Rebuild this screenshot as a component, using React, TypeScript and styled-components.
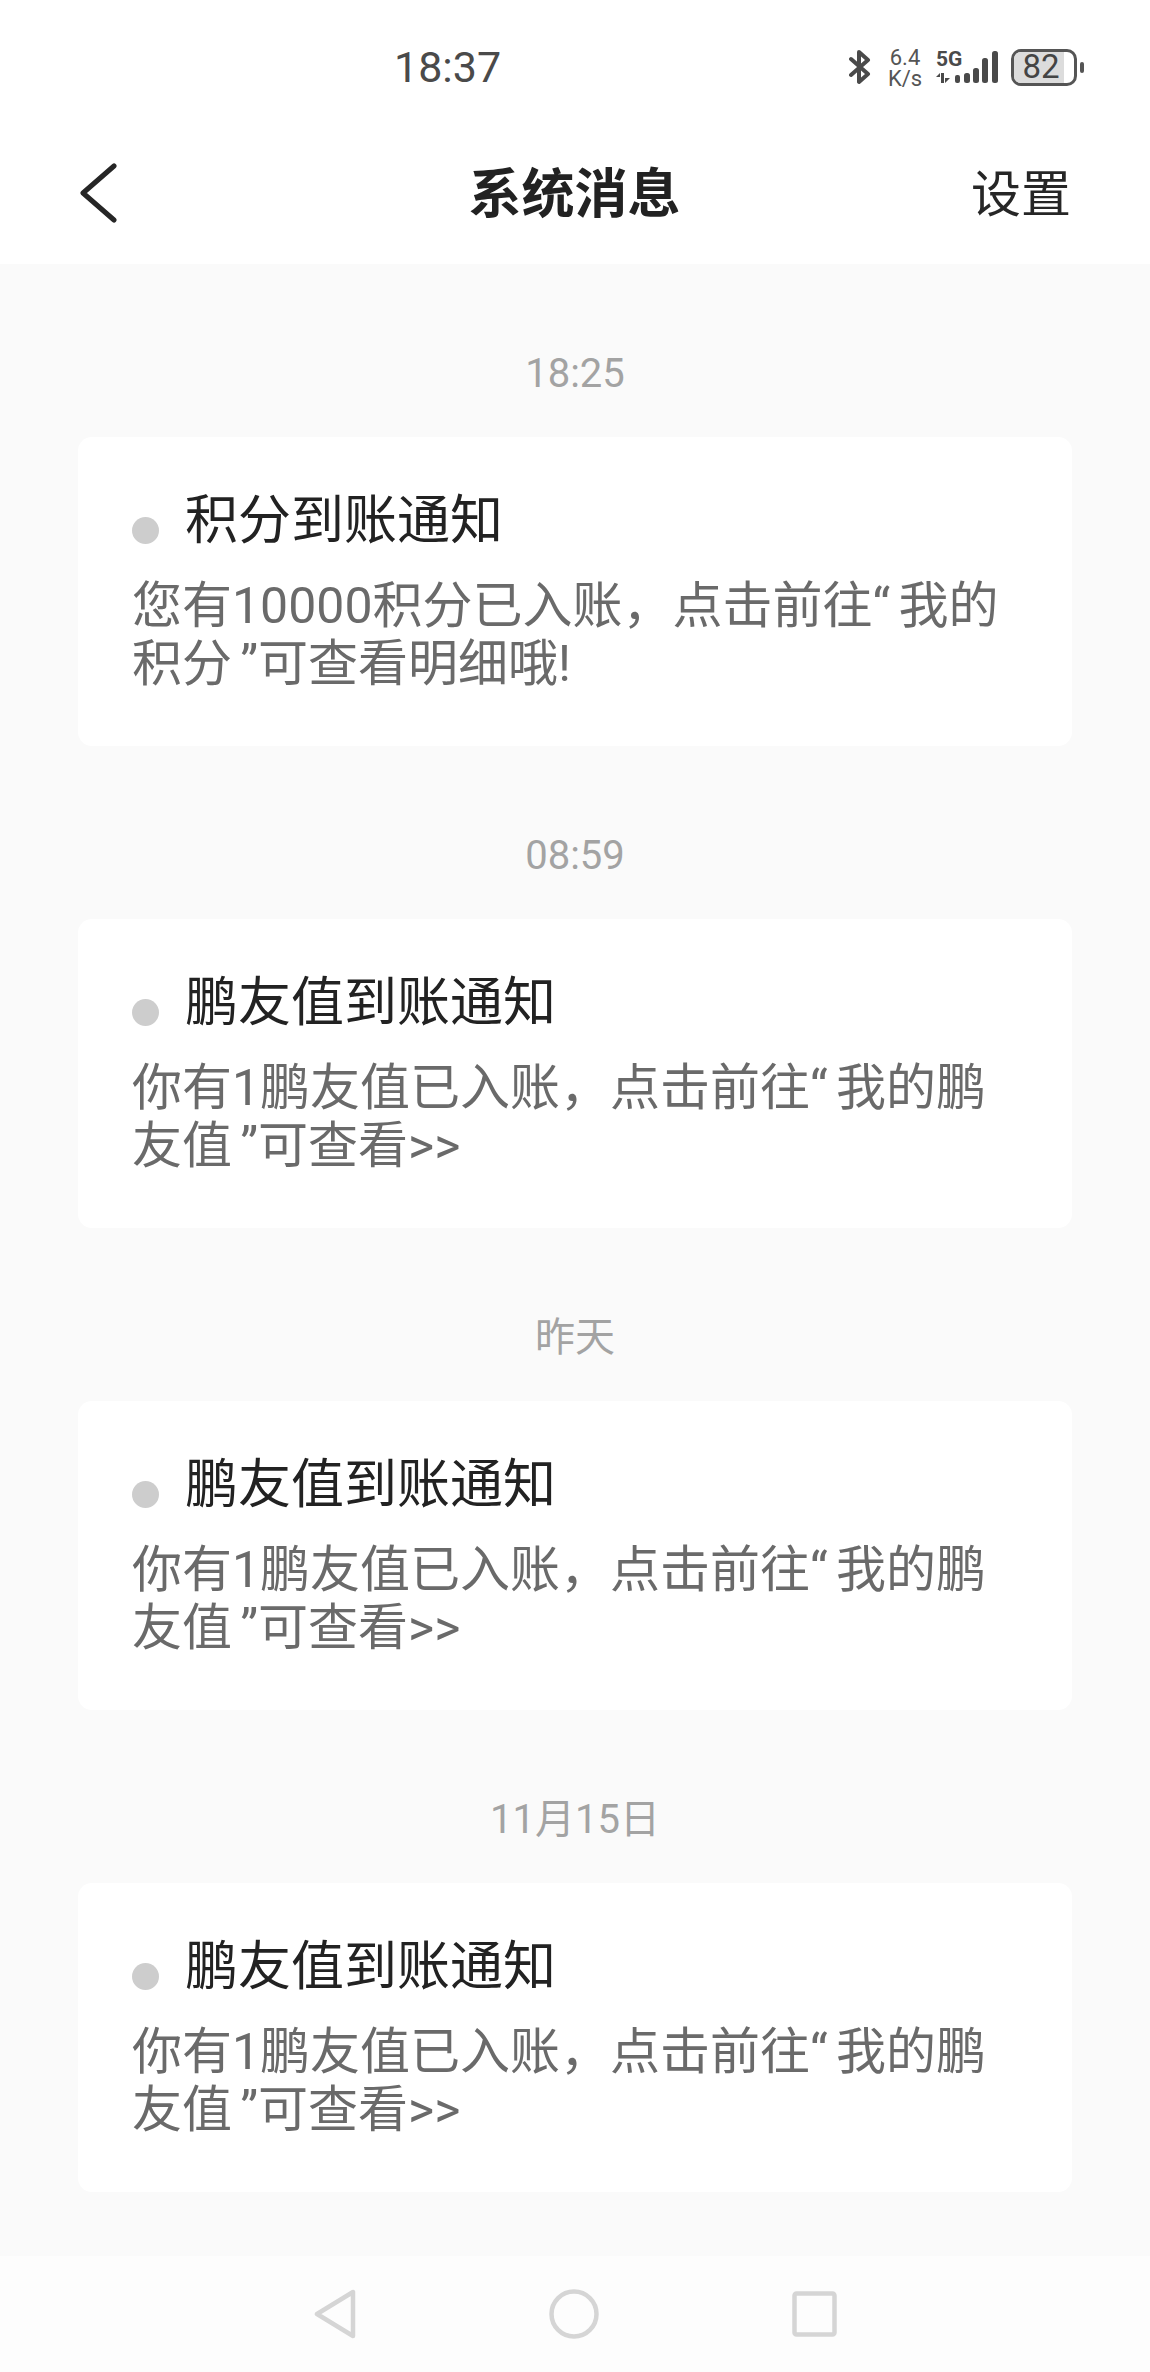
import React from "react";
import styled, { createGlobalStyle } from "styled-components";

const Global = createGlobalStyle`
  html, body { margin: 0; padding: 0; background: #fafafa; }
  * { box-sizing: border-box; }
`;

const Phone = styled.div`
  width: 1150px;
  height: 2372px;
  display: flex;
  flex-direction: column;
  overflow: hidden;
  background: #fafafa;
  font-family: Roboto, "Noto Sans CJK SC", "Noto Sans", sans-serif;
`;

const StatusBar = styled.div`
  height: 130px;
  background: #fff;
  display: flex;
  align-items: center;
  justify-content: space-between;
  padding: 4px 66px 0 394px;
  color: #444;
`;

const Clock = styled.div`
  font-size: 43px;
  line-height: 50px;
  color: #4a4a4a;
`;

const StatusIcons = styled.div`
  display: flex;
  align-items: center;
`;

const Speed = styled.div`
  margin: 1px 0 0 16px;
  width: 36px;
  display: flex;
  flex-direction: column;
  align-items: center;
  font-size: 22px;
  line-height: 21px;
  color: #555;
`;

const SpeedLine = styled.div`
  height: 21px;
`;

const Network = styled.div`
  position: relative;
  margin-left: 12px;
  width: 64px;
  height: 38px;
`;

const FiveG = styled.span`
  position: absolute;
  left: 1px;
  top: 0;
  font-weight: 700;
  font-size: 21px;
  line-height: 22px;
  color: #4a4a4a;
`;

const Battery = styled.div`
  position: relative;
  margin-left: 12px;
  width: 66px;
  height: 37px;
  border: 3px solid #555;
  border-radius: 10px;
  display: flex;
  align-items: center;
  justify-content: center;
  overflow: hidden;
`;

const BatteryFill = styled.div`
  position: absolute;
  left: 0;
  top: 0;
  bottom: 0;
  background: #dcdcdc;
`;

const BatteryLevel = styled.span`
  position: relative;
  padding-right: 6px;
  font-size: 33px;
  line-height: 30px;
  color: #444;
`;

const BatteryNub = styled.div`
  margin-left: 3px;
  width: 4px;
  height: 11px;
  border-radius: 2px;
  background: #555;
`;

const Header = styled.header`
  height: 134px;
  background: #fff;
  display: grid;
  grid-template-columns: 1fr auto 1fr;
  align-items: center;
  padding: 0 79px 4px 78px;
`;

const BackButton = styled.div`
  display: flex;
  align-items: center;
  padding-bottom: 5px;
`;

const Title = styled.div`
  font-size: 53px;
  line-height: 70px;
  font-weight: 700;
  color: #222;
`;

const Setting = styled.div`
  justify-self: end;
  font-size: 50px;
  line-height: 70px;
  color: #262626;
`;

const List = styled.main`
  flex: 1;
  background: #fafafa;
  padding: 0 78px;
`;

const Stamp = styled.div`
  height: 173px;
  padding-top: 81px;
  text-align: center;
  font-size: 40px;
  line-height: 58px;
  color: #a3a3a3;
`;

const Card = styled.article`
  height: 309px;
  background: #fff;
  border-radius: 14px;
  padding: 47px 40px 0 54px;
`;

const CardHead = styled.div`
  display: flex;
  align-items: center;
  height: 74px;
`;

const Dot = styled.span`
  width: 27px;
  height: 27px;
  margin: 18px 26px 0 0;
  border-radius: 50%;
  background: #cdcdcd;
`;

const CardTitle = styled.h2`
  margin: 0;
  font-size: 53px;
  line-height: 74px;
  font-weight: 400;
  color: #222;
`;

const CardBody = styled.div`
  margin-top: 19px;
  font-size: 50px;
  color: #6a6a6a;
`;

const BodyLine = styled.div`
  height: 58px;
  line-height: 58px;
  white-space: nowrap;
`;

const Quote = styled.span<{ $side: "left" | "right" }>`
  display: inline-block;
  width: 26px;
  text-align: ${(p) => p.$side};
`;

const BottomNav = styled.nav`
  height: 116px;
  background: #fdfdfd;
  display: flex;
  align-items: center;
  justify-content: center;
  gap: 193px;
`;

const navStroke = { fill: "none", stroke: "#d5d5d5", strokeWidth: 4.5, strokeLinejoin: "round" as const };

const pointsLines = ["您有10000积分已入账，点击前往“我的", "积分”可查看明细哦!"];
const valueLines = ["你有1鹏友值已入账，点击前往“我的鹏", "友值”可查看>>"];

const messages = [
  { time: "18:25", title: "积分到账通知", lines: pointsLines },
  { time: "08:59", title: "鹏友值到账通知", lines: valueLines },
  { time: "昨天", title: "鹏友值到账通知", lines: valueLines },
  { time: "11月15日", title: "鹏友值到账通知", lines: valueLines },
];

function renderLine(line: string) {
  return line.split(/([“”])/).map((part, i) => {
    if (part === "“") return <Quote key={i} $side="left">{part}</Quote>;
    if (part === "”") return <Quote key={i} $side="right">{part}</Quote>;
    return <React.Fragment key={i}>{part}</React.Fragment>;
  });
}

export default function App() {
  return (
    <Phone lang="zh-CN">
      <Global />
      <StatusBar>
        <Clock>18:37</Clock>
        <StatusIcons>
          <svg width="22" height="36" viewBox="0 0 22 36" fill="none" stroke="#4a4a4a" strokeWidth="4" strokeLinejoin="round" strokeLinecap="round">
            <path d="M2 10 L19 25 L10 33 V3 L19 11 L2 26" />
          </svg>
          <Speed>
            <SpeedLine>6.4</SpeedLine>
            <SpeedLine>K/s</SpeedLine>
          </Speed>
          <Network>
            <FiveG>5G</FiveG>
            <svg width="64" height="38" viewBox="0 0 64 38" fill="#4a4a4a">
              <rect x="6" y="25" width="3" height="10" />
              <path d="M1 29 L5 25 V29 Z M10 30 H15 L10 35 Z" />
              <rect x="20" y="27" width="5" height="8" rx="2" />
              <rect x="29" y="25" width="6" height="10" rx="2.5" />
              <rect x="38" y="20" width="6" height="15" rx="2.5" />
              <rect x="47" y="10" width="6" height="25" rx="2.5" />
              <rect x="57" y="3" width="6" height="32" rx="2.5" />
            </svg>
          </Network>
          <Battery>
            <BatteryFill style={{ width: "84%" }} />
            <BatteryLevel>82</BatteryLevel>
          </Battery>
          <BatteryNub />
        </StatusIcons>
      </StatusBar>
      <Header>
        <BackButton>
          <svg width="40" height="60" viewBox="0 0 40 60" fill="none" stroke="#262626" strokeWidth="5" strokeLinecap="round" strokeLinejoin="round">
            <path d="M36 3 L5 30 L36 57" />
          </svg>
        </BackButton>
        <Title>系统消息</Title>
        <Setting>设置</Setting>
      </Header>
      <List>
        {messages.map((m, i) => (
          <section key={i}>
            <Stamp>{m.time}</Stamp>
            <Card>
              <CardHead>
                <Dot />
                <CardTitle>{m.title}</CardTitle>
              </CardHead>
              <CardBody>
                {m.lines.map((line, j) => (
                  <BodyLine key={j}>{renderLine(line)}</BodyLine>
                ))}
              </CardBody>
            </Card>
          </section>
        ))}
      </List>
      <BottomNav>
        <svg width="42" height="50" viewBox="0 0 42 50">
          <path d="M39 3 V47 L3 25 Z" {...navStroke} />
        </svg>
        <svg width="50" height="50" viewBox="0 0 50 50">
          <circle cx="25" cy="25" r="22.5" {...navStroke} />
        </svg>
        <svg width="45" height="46" viewBox="0 0 45 46">
          <rect x="2.5" y="2.5" width="40" height="41" rx="2" {...navStroke} />
        </svg>
      </BottomNav>
    </Phone>
  );
}
